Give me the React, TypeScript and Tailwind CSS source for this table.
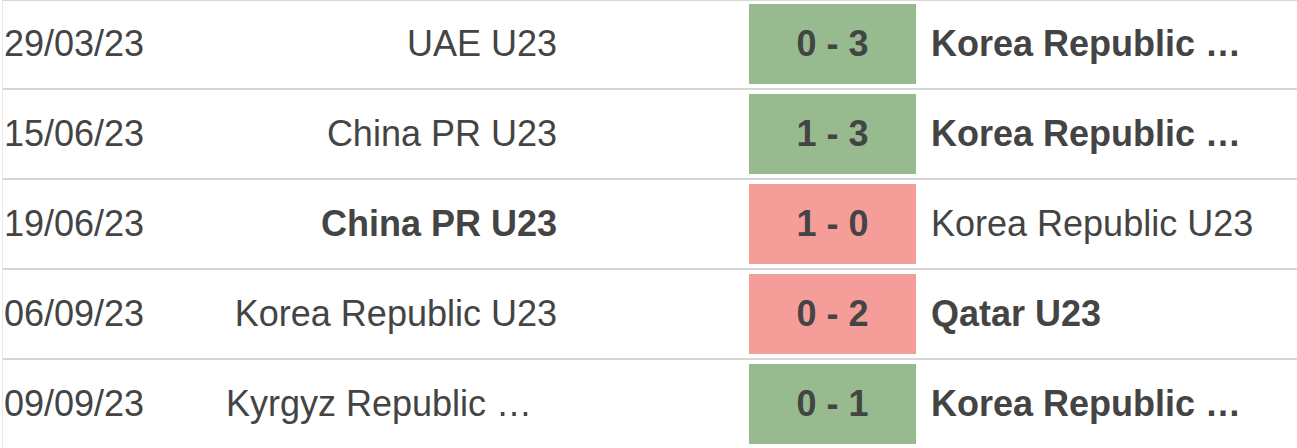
const matches = [
  { date: '29/03/23', home: 'UAE U23', away: 'Korea Republic U23', score: '0 - 3', win: true, homeBold: false },
  { date: '15/06/23', home: 'China PR U23', away: 'Korea Republic U23', score: '1 - 3', win: true, homeBold: false },
  { date: '19/06/23', home: 'China PR U23', away: 'Korea Republic U23', score: '1 - 0', win: false, homeBold: true },
  { date: '06/09/23', home: 'Korea Republic U23', away: 'Qatar U23', score: '0 - 2', win: false, homeBold: false },
  { date: '09/09/23', home: 'Kyrgyz Republic U23', away: 'Korea Republic U23', score: '0 - 1', win: true, homeBold: false },
];

export default function App() {
  return (
    <div
      className="w-[1297px] h-[448px] overflow-hidden bg-white text-[#444] text-[36px]"
      style={{ fontFamily: '"Liberation Sans", Arial, sans-serif' }}
    >
      <div className="ml-[2px] border-l border-l-[#e8e8e8] border-t border-t-[#d6d6d6]">
        {matches.map((m, i) => (
          <div
            key={m.date}
            className={
              'flex items-center border-b-2 border-b-[#d6d6d6] pb-1 ' + (i === 0 ? 'pt-[3px]' : 'pt-1')
            }
          >
            <div className="w-[223px] pl-px leading-none whitespace-nowrap">{m.date}</div>
            <div
              className={
                'w-[331px] truncate text-right leading-[1.2] ' + (m.homeBold ? 'font-bold' : 'font-normal')
              }
            >
              {m.home}
            </div>
            <div className="w-[192px]" />
            <div
              className={
                'w-[167px] h-[80px] flex items-center justify-center font-bold ' +
                (m.win ? 'bg-[#97bb8f]' : 'bg-[#f59e99]')
              }
            >
              {m.score}
            </div>
            <div
              className={
                'ml-[15px] w-[328px] truncate leading-[1.2] ' + (m.homeBold ? 'font-normal' : 'font-bold')
              }
            >
              {m.away}
            </div>
          </div>
        ))}
      </div>
    </div>
  );
}
